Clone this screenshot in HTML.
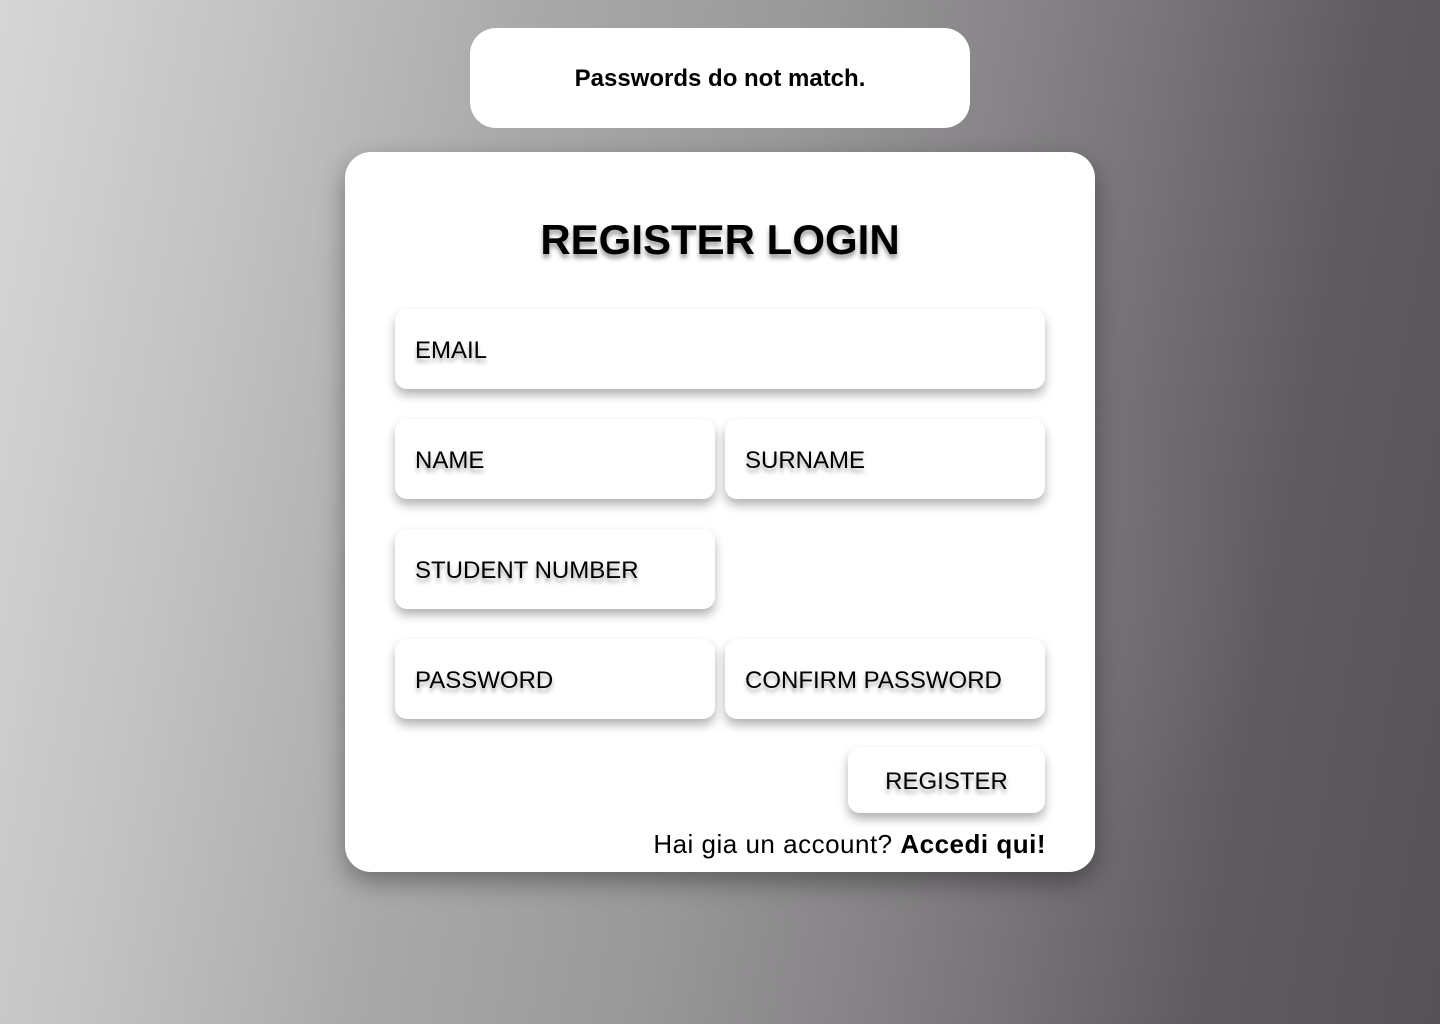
<!DOCTYPE html>
<html><head><meta charset="utf-8"><style>
*{box-sizing:border-box;margin:0;padding:0}
html,body{width:1440px;height:1024px;overflow:hidden}
body{font-family:"Liberation Sans",sans-serif;position:relative;
background:
radial-gradient(ellipse 700px 420px at 780px 620px, rgba(140,138,140,0.35), rgba(140,138,140,0) 70%),
linear-gradient(100deg,#d6d6d6 0%,#c4c4c4 15%,#a9a9a9 33%,#9a999a 50%,#7f7c7f 68%,#605b60 85%,#565156 100%);}
.toast{position:absolute;left:470px;top:28px;width:500px;height:100px;background:#fff;border-radius:26px;display:flex;align-items:center;justify-content:center;font-weight:bold;font-size:24px;color:#000;padding-top:2px}
.card{position:absolute;left:345px;top:152px;width:750px;height:720px;background:#fff;border-radius:26px;box-shadow:0 10px 25px rgba(0,0,0,0.35);}
h1{position:absolute;left:0;right:0;top:216px;text-align:center;font-size:42px;font-weight:bold;color:#000;text-shadow:0 4px 5px rgba(0,0,0,0.4)}
.f{position:absolute;height:80px;background:#fff;border-radius:12px;box-shadow:0 6px 10px rgba(0,0,0,0.3);font-size:24px;color:#000;display:flex;align-items:center;padding-left:20px;padding-top:4px;text-shadow:0 4px 4px rgba(0,0,0,0.35)}
.btn{position:absolute;left:848px;top:747px;width:197px;height:66px;background:#fff;border-radius:12px;box-shadow:0 6px 10px rgba(0,0,0,0.3);font-size:24px;display:flex;align-items:center;justify-content:center;padding-top:4px;text-shadow:0 4px 4px rgba(0,0,0,0.35)}
.acc{position:absolute;right:394px;top:829px;font-size:26px;color:#000;letter-spacing:0.5px}
</style></head><body>
<div class="toast">Passwords do not match.</div>
<div class="card"></div>
<h1>REGISTER LOGIN</h1>
<div class="f" style="left:395px;top:309px;width:650px">EMAIL</div>
<div class="f" style="left:395px;top:419px;width:320px">NAME</div>
<div class="f" style="left:725px;top:419px;width:320px">SURNAME</div>
<div class="f" style="left:395px;top:529px;width:320px">STUDENT NUMBER</div>
<div class="f" style="left:395px;top:639px;width:320px">PASSWORD</div>
<div class="f" style="left:725px;top:639px;width:320px">CONFIRM PASSWORD</div>
<div class="btn">REGISTER</div>
<div class="acc">Hai gia un account? <b>Accedi qui!</b></div>
</body></html>
